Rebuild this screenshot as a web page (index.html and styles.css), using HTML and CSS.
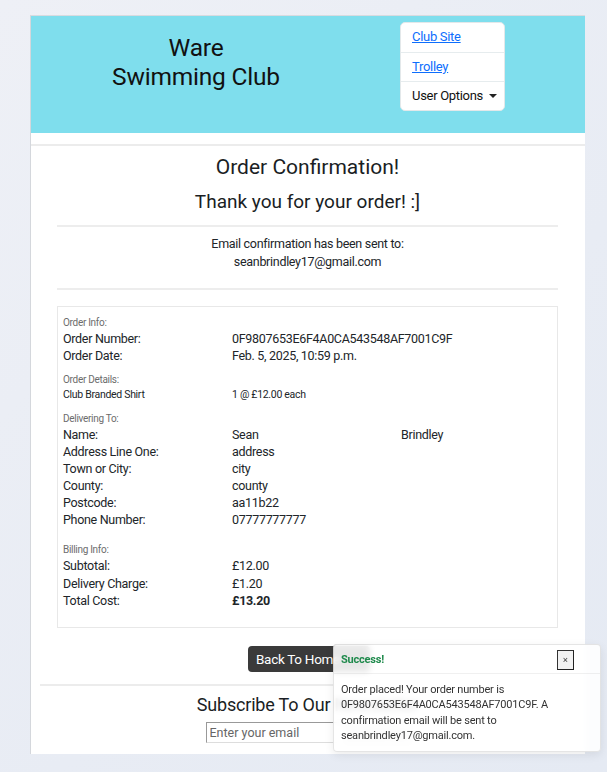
FILE: index.html
```html
<!DOCTYPE html>
<html lang="en">
<head>
<meta charset="utf-8">
<title>Order Confirmation - Ware Swimming Club</title>
<link rel="stylesheet" href="styles.css">
</head>
<body>
<div class="page">
  <header class="hero">
    <div class="brand-col">
      <h1 class="brand">Ware<br>Swimming Club</h1>
    </div>
    <ul class="navlist">
      <li><a href="#">Club Site</a></li>
      <li><a href="#">Trolley</a></li>
      <li class="dropdown">User Options <span class="caret"></span></li>
    </ul>
  </header>
  <div class="header-line"></div>
  <main class="content">
    <h2 class="title">Order Confirmation!</h2>
    <h3 class="thanks">Thank you for your order! :]</h3>
    <hr class="rule">
    <p class="email-note">Email confirmation has been sent to:<br>seanbrindley17@gmail.com</p>
    <hr class="rule">
    <section class="details">
      <div class="label">Order Info:</div>
      <div class="row"><span>Order Number:</span><span>0F9807653E6F4A0CA543548AF7001C9F</span><span></span></div>
      <div class="row"><span>Order Date:</span><span>Feb. 5, 2025, 10:59 p.m.</span><span></span></div>
      <div class="label gap">Order Details:</div>
      <div class="row small"><span>Club Branded Shirt</span><span>1 @ £12.00 each</span><span></span></div>
      <div class="label gap">Delivering To:</div>
      <div class="row"><span>Name:</span><span>Sean</span><span>Brindley</span></div>
      <div class="row"><span>Address Line One:</span><span>address</span><span></span></div>
      <div class="row"><span>Town or City:</span><span>city</span><span></span></div>
      <div class="row"><span>County:</span><span>county</span><span></span></div>
      <div class="row"><span>Postcode:</span><span>aa11b22</span><span></span></div>
      <div class="row"><span>Phone Number:</span><span>07777777777</span><span></span></div>
      <div class="label biggap">Billing Info:</div>
      <div class="row"><span>Subtotal:</span><span>£12.00</span><span></span></div>
      <div class="row spaced"><span>Delivery Charge:</span><span>£1.20</span><span></span></div>
      <div class="row"><span>Total Cost:</span><span class="strong">£13.20</span><span></span></div>
    </section>
    <div class="actions"><a href="#" class="btn-home">Back To Home</a></div>
  </main>
  <hr class="footer-rule">
  <section class="newsletter">
    <h4 class="news-title">Subscribe To Our Newsletter</h4>
    <form class="news-form">
      <input type="email" class="news-input" placeholder="Enter your email">
      <button type="button" class="news-btn">Subscribe</button>
    </form>
  </section>
</div>

<div class="toast">
  <div class="toast-head">
    <strong class="toast-title">Success!</strong>
    <button type="button" class="toast-close">×</button>
  </div>
  <div class="toast-body">Order placed! Your order number is 0F9807653E6F4A0CA543548AF7001C9F. A confirmation email will be sent to seanbrindley17@gmail.com.</div>
</div>
</body>
</html>
```

FILE: styles.css
```css
* { box-sizing: border-box; }

html, body {
  margin: 0;
  padding: 0;
}

body {
  font-family: "Roboto", "Liberation Sans", sans-serif;
  color: #212529;
  background: linear-gradient(135deg, #eef0f6 0%, #e8ecf4 60%, #e5eaf3 100%);
  min-height: 772px;
}

.page {
  margin: 15px 0 0 30px;
  width: 555px;
  background: #fff;
  border-left: 1px solid #d4d7dc;
  border-top: 1px solid #d8dbe0;
  padding-bottom: 10px;
}

/* header */
.hero {
  background: #7fdeed;
  height: 117px;
  display: flex;
  align-items: flex-start;
}

.brand-col {
  width: 330px;
  padding-top: 17px;
  text-align: center;
}

.brand {
  margin: 0;
  font-size: 24.5px;
  line-height: 29px;
  font-weight: 400;
  color: #111;
  letter-spacing: -0.2px;
}

.navlist {
  list-style: none;
  margin: 6px 0 0 39px;
  padding: 0;
  width: 105px;
  background: #fff;
  border-radius: 5px;
  border: 1px solid #e3e8ea;
  font-size: 13px;
  letter-spacing: -0.3px;
}

.navlist li {
  height: 29px;
  line-height: 27px;
  padding-left: 11px;
  border-top: 1px solid #e6ecee;
}

.navlist li:first-child { border-top: 0; }

.navlist a {
  color: #0d6efd;
  text-decoration: underline;
}

.dropdown { color: #111; }

.caret {
  display: inline-block;
  width: 0;
  height: 0;
  margin-left: 3px;
  vertical-align: 2px;
  border-left: 4px solid transparent;
  border-right: 4px solid transparent;
  border-top: 4px solid #222;
}

.header-line {
  margin-top: 11px;
  height: 2px;
  background: #ececec;
}

/* main */
.content {
  padding: 0 27px 0 26px;
  text-align: center;
}

.title {
  margin: 9px 0 0;
  font-size: 21px;
  line-height: 25px;
  font-weight: 400;
  color: #1a1e24;
}

.thanks {
  margin: 11px 0 0;
  font-size: 19px;
  line-height: 22px;
  font-weight: 400;
  color: #1a1e24;
}

.rule {
  margin: 12px 0 0;
  border: 0;
  height: 2px;
  background: #ededed;
}

.email-note {
  margin: 8px 0 17px;
  font-size: 12.5px;
  line-height: 18px;
  letter-spacing: -0.3px;
}

.email-note + .rule { margin-top: 0; }

.details {
  margin-top: 16px;
  border: 1px solid #e8e8e8;
  padding: 9px 0 18px 5px;
  text-align: left;
  font-size: 12.5px;
  letter-spacing: -0.3px;
}

.label {
  font-size: 10px;
  line-height: 14px;
  color: #6c6c6c;
}

.label.gap { margin-top: 9px; }
.label.biggap { margin-top: 15px; }

.row {
  display: grid;
  grid-template-columns: 169px 169px 1fr;
  line-height: 17px;
}

.row.small { font-size: 10.5px; line-height: 16px; }
.row.spaced { margin-top: 1px; }

.strong { font-weight: 700; }

.actions {
  margin-top: 18px;
  display: flex;
  justify-content: center;
  padding-left: 3px;
}

.btn-home {
  display: block;
  width: 122px;
  height: 26px;
  line-height: 26px;
  padding-left: 8px;
  background: #3a3a3a;
  color: #fff;
  border-radius: 4px;
  font-size: 13.5px;
  letter-spacing: -0.3px;
  text-decoration: none;
  text-align: left;
}

.footer-rule {
  margin: 12px 17px 0 9px;
  border: 0;
  height: 2px;
  background: #ececec;
}

.newsletter { text-align: center; }

.news-title {
  margin: 8px 0 0;
  font-size: 18px;
  line-height: 22px;
  font-weight: 400;
  color: #1a1e24;
  letter-spacing: -0.2px;
}

.news-form {
  margin-top: 6px;
  display: flex;
  justify-content: center;
}

.news-input {
  width: 141px;
  height: 21px;
  border: 1px solid #999;
  border-right-color: #ddd;
  border-bottom-color: #ddd;
  padding: 0 3px;
  font-family: inherit;
  font-size: 12.5px;
  color: #333;
}

.news-input::placeholder { color: #666; }

.news-btn {
  width: 64px;
  height: 21px;
  margin-top: 1px;
  border: 1px solid #bbb;
  background: #fafafa;
  color: #999;
  font-family: inherit;
  font-size: 12.5px;
  padding: 0;
}

/* toast overlay */
.toast {
  position: fixed;
  left: 333px;
  top: 644px;
  width: 268px;
  height: 108px;
  background: rgba(255, 255, 255, 0.88);
  backdrop-filter: blur(3px);
  border: 1px solid rgba(0, 0, 0, 0.1);
  border-radius: 4px;
  box-shadow: 0 3px 10px rgba(0, 0, 0, 0.08);
  font-size: 11px;
  letter-spacing: -0.2px;
}

.toast-head {
  display: flex;
  align-items: center;
  justify-content: space-between;
  height: 29px;
  padding: 0 26px 0 7px;
  border-bottom: 1px solid rgba(0, 0, 0, 0.06);
}

.toast-title {
  color: #1f8a4c;
  font-weight: 700;
  font-size: 11px;
}

.toast-close {
  width: 17px;
  height: 20px;
  padding: 0;
  margin-top: 1px;
  border: 1px solid #333;
  border-right-color: #222;
  border-bottom-color: #222;
  background: #f2f2f2;
  font-size: 9px;
  line-height: 18px;
  color: #333;
}

.toast-body {
  padding: 8px 10px 0 7px;
  line-height: 15.3px;
  color: #333;
}
```
